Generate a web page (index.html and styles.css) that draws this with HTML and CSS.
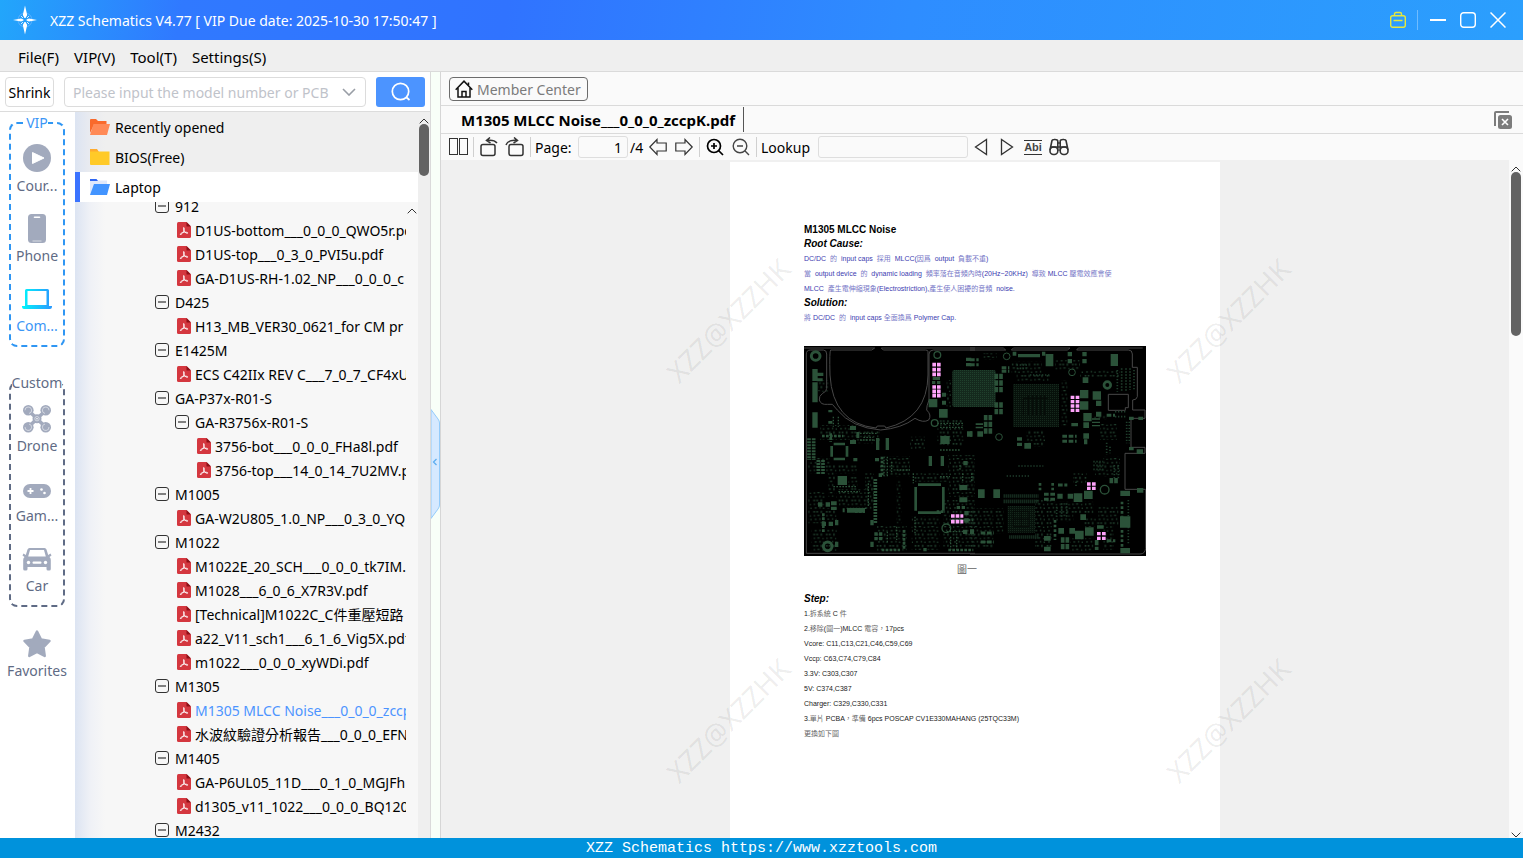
FILE: index.html
```html
<!DOCTYPE html>
<html lang="en"><head><meta charset="UTF-8">
    <title>XZZ Schematics</title>
    <link rel="stylesheet" href="styles.css">
</head>

<body>

    <!-- shared icons -->
    <svg class="sprite" aria-hidden="true">
        <symbol id="pdf" viewBox="0 0 14 16">
            <path d="M1.5 0H9.500L14 4.500V14.500Q14 16 12.500 16H1.500Q0 16 0 14.500V1.500Q0 0 1.500 0Z" fill="#d4373f"/>
            <path d="M9.500 0L14 4.500H9.500Z" fill="#8d1118"/>
            <path d="M6.800 5.500C6 5.500 6.800 8 7.300 9.200C8 10.700 9.800 11.500 10.700 11.200C11.300 10.500 9 10 7 10.200C5 10.500 3 11.700 3.300 12.500C4.200 13 5.800 10.800 6.600 9.200C7.200 8 7.500 5.700 6.800 5.500Z" fill="none" stroke="#fff" stroke-width=".9"/>
        </symbol>
        <symbol id="minus" viewBox="0 0 14 14">
            <rect x=".5" y=".5" width="13" height="13" rx="2.500" fill="none" stroke="#333"/>
            <path d="M3 7H11" stroke="#333" stroke-width="1.200"/>
        </symbol>
        <symbol id="up" viewBox="0 0 10 6">
            <path d="M.7 5.300L5 1L9.300 5.300" fill="none" stroke="#333"/>
        </symbol>
    </svg>

    <header class="titlebar">
        <svg class="logo" width="24" height="30" viewBox="0 0 24 30">
            <circle cx="12" cy="15" r="7" fill="none" stroke="#5eb2ff" stroke-width="1"/>
            <path d="M12 .5L14.200 10L12.500 13H11.500L9.800 10ZM12 29.500L14.200 20L12.500 17H11.500L9.800 20ZM0 15L8 13.500L10.500 14.500V15.500L8 16.500ZM24 15L16 13.500L13.500 14.500V15.500L16 16.500Z" fill="#fff"/>
            <path d="M8 11L10 13M16 11L14 13M8 19L10 17M16 19L14 17" stroke="#d5eaff"/>
        </svg>
        <h1 class="app-title">XZZ Schematics V4.77 [ VIP Due date: 2025-10-30 17:50:47 ]</h1>
        <button class="win-btn" aria-label="Toolbox"><svg width="18" height="18" viewBox="0 0 18 18" fill="none" stroke="#e6e83c" stroke-width="1.400"><rect x="1.700" y="4.700" width="14.600" height="11.600" rx="2"/><path d="M5.500 4.500V3Q5.500 1.500 7 1.500H11Q12.500 1.500 12.500 3V4.500M4.500 9.500H13.500"/></svg></button>
        <span class="win-sep"></span>
        <button class="win-btn" aria-label="Minimize"><svg width="16" height="16" viewBox="0 0 16 16"><path d="M0 8H16" stroke="#fff" stroke-width="2"/></svg></button>
        <button class="win-btn" aria-label="Maximize"><svg width="16" height="16" viewBox="0 0 16 16"><rect x=".7" y=".7" width="14.600" height="14.600" rx="3" fill="none" stroke="#fff" stroke-width="1.400"/></svg></button>
        <button class="win-btn" aria-label="Close"><svg width="16" height="16" viewBox="0 0 16 16"><path d="M.5 .5L15.500 15.500M15.500 .5L.5 15.500" stroke="#fff" stroke-width="1.500"/></svg></button>
    </header>

    <nav class="menubar">
        <button>File(F)</button>
        <button>VIP(V)</button>
        <button>Tool(T)</button>
        <button>Settings(S)</button>
    </nav>

    <main class="main">
        <section class="left">
            <form class="search">
                <button type="button" class="shrink">Shrink</button>
                <div class="combo">
                    <input type="text" aria-label="Model number" placeholder="Please input the model number or PCB">
                    <button type="button" aria-label="History"><svg width="14" height="8" viewBox="0 0 14 8"><path d="M1 1L7 7L13 1" fill="none" stroke="#999ea6" stroke-width="1.600"/></svg></button>
                </div>
                <button type="button" class="go" aria-label="Search"><svg width="20" height="20" viewBox="0 0 20 20" fill="none" stroke="#fff" stroke-width="1.700"><circle cx="9.500" cy="9.500" r="8.200"/><path d="M15 15L18.500 18"/></svg></button>
            </form>

            <div class="browser">
                <div class="sidebar">
                    <fieldset class="group vip">
                        <legend>VIP</legend>
                        <button class="cat">
                            <svg width="30" height="30" viewBox="0 0 30 30"><circle cx="15" cy="15" r="14" fill="#a2aabd"/><path d="M10.500 9.500V20.500L22 15Z" fill="#fff" stroke="#fff" stroke-linejoin="round"/></svg>
                            <span>Cour...</span>
                        </button>
                        <button class="cat">
                            <svg width="30" height="30" viewBox="0 0 30 30"><rect x="6" y="1" width="18" height="29" rx="3.500" fill="#a2aabd"/><path d="M12.500 4.200H17.500" stroke="#fff" stroke-width="1.600" stroke-linecap="round"/><path d="M10.500 28H19.500" stroke="#fff" stroke-width=".6"/></svg>
                            <span>Phone</span>
                        </button>
                        <button class="cat active">
                            <svg width="30" height="30" viewBox="0 0 30 30"><defs><linearGradient id="lap"><stop offset="0" stop-color="#00f6fb"/><stop offset="1" stop-color="#2a98ff"/></linearGradient></defs><path fill-rule="evenodd" d="M4.500 6H25.500Q27 6 27 7.500V23H30V24Q29.800 26 28 26H2Q.2 26 0 24V23H3V7.500Q3 6 4.500 6ZM5.500 8V22H24.500V8Z" fill="url(#lap)"/></svg>
                            <span>Com...</span>
                        </button>
                    </fieldset>

                    <fieldset class="group custom">
                        <legend>Custom</legend>
                        <button class="cat">
                            <svg width="30" height="30" viewBox="0 0 30 30"><g fill="#a2aabd"><circle cx="6.300" cy="7.300" r="5.300"/><circle cx="23.700" cy="7.300" r="5.300"/><circle cx="6.300" cy="24.300" r="5.300"/><circle cx="23.700" cy="24.300" r="5.300"/><circle cx="15" cy="15.700" r="4.500"/></g><path d="M6.500 7.500L23.500 24M23.500 7.500L6.500 24" stroke="#a2aabd" stroke-width="3.500"/><g fill="none" stroke="#e6e9ef" stroke-width=".7"><path d="M3 7.300A3.300 3.300 0 1 1 7 10.500M27 7.300A3.300 3.300 0 1 0 23 10.500M3 24A3.300 3.300 0 1 0 7 21M27 24A3.300 3.300 0 1 1 23 21"/><circle cx="15" cy="15.700" r="2.200"/></g><circle cx="15" cy="15.700" r=".8" fill="#fff"/></svg>
                            <span>Drone</span>
                        </button>
                        <button class="cat">
                            <svg width="30" height="30" viewBox="0 0 30 30"><rect x="1" y="11" width="28" height="14" rx="7" fill="#a2aabd"/><path d="M5.500 18H11.500M8.500 15V21" stroke="#fff" stroke-width="1.800"/><circle cx="19.500" cy="16.500" r="1.300" fill="#fff"/><circle cx="22.500" cy="20" r="1.300" fill="#fff"/></svg>
                            <span>Gam...</span>
                        </button>
                        <button class="cat">
                            <svg width="30" height="30" viewBox="0 0 30 30"><path fill-rule="evenodd" fill="#a2aabd" d="M7.500 5H22.500Q24 5 24.500 6.500L26.200 12L28.500 10.500L29.500 12.500L27.500 14Q28.800 15 28.800 17V26Q28.800 27.500 27.300 27.500H26Q24.500 27.500 24.500 26V24H5.500V26Q5.500 27.500 4 27.500H2.700Q1.200 27.500 1.200 26V17Q1.200 15 2.500 14L.5 12.500L1.500 10.500L3.800 12L5.500 6.500Q6 5 7.500 5ZM8 7L6.200 13.500H23.800L22 7Z"/><circle cx="6.500" cy="19.500" r="1.700" fill="#fff"/><circle cx="23.500" cy="19.500" r="1.700" fill="#fff"/><rect x="10.500" y="18.500" width="9" height="2.200" rx="1" fill="#fff"/></svg>
                            <span>Car</span>
                        </button>
                    </fieldset>

                    <button class="cat favorites">
                        <svg width="30" height="30" viewBox="0 0 30 30"><path d="M15 3.500L19 11.500L27.500 13L21.500 19.200L22.700 28L15 24L7.300 28L8.500 19.200L2.500 13L11 11.500Z" fill="#a2aabd" stroke="#a2aabd" stroke-width="2.500" stroke-linejoin="round"/></svg>
                        <span>Favorites</span>
                    </button>
                </div>

                <div class="folders">
                    <button class="folder">
                        <svg width="20" height="16" viewBox="0 0 20 16"><path d="M0 14V1Q0 0 1 0H6L8 2H16.500V6H4Z" fill="#f96a2c"/><path d="M3.500 5H20L17 16H0Z" fill="#ff8a57"/></svg>
                        Recently opened
                    </button>
                    <button class="folder">
                        <svg width="20" height="16" viewBox="0 0 20 16"><path d="M0 5V0H7L9 3V5Z" fill="#ffab2e"/><path d="M0 2.500H19.500V16H1Q0 16 0 15Z" fill="#ffca28"/></svg>
                        BIOS(Free)
                    </button>
                    <button class="folder selected">
                        <svg width="20" height="16" viewBox="0 0 20 16"><path d="M0 16V1.500H17V6Z" fill="#dfe8fb"/><path d="M0 2V0H6.500L8 2Z" fill="#2f66f2"/><path d="M4 5H20L17 16H0Z" fill="#4294ff"/></svg>
                        Laptop
                    </button>

                    <div class="tree-box">
                        <ul class="tree">
                            <li><svg><use href="#minus"/></svg>912</li>
                            <li class="file"><svg><use href="#pdf"/></svg>D1US-bottom___0_0_0_QWO5r.pdf</li>
                            <li class="file"><svg><use href="#pdf"/></svg>D1US-top___0_3_0_PVI5u.pdf</li>
                            <li class="file"><svg><use href="#pdf"/></svg>GA-D1US-RH-1.02_NP___0_0_0_c</li>
                            <li><svg><use href="#minus"/></svg>D425</li>
                            <li class="file"><svg><use href="#pdf"/></svg>H13_MB_VER30_0621_for CM pr</li>
                            <li><svg><use href="#minus"/></svg>E1425M</li>
                            <li class="file"><svg><use href="#pdf"/></svg>ECS C42IIx REV C___7_0_7_CF4xU</li>
                            <li><svg><use href="#minus"/></svg>GA-P37x-R01-S</li>
                            <li class="sub"><svg><use href="#minus"/></svg>GA-R3756x-R01-S</li>
                            <li class="sub file"><svg><use href="#pdf"/></svg>3756-bot___0_0_0_FHa8l.pdf</li>
                            <li class="sub file"><svg><use href="#pdf"/></svg>3756-top___14_0_14_7U2MV.pdf</li>
                            <li><svg><use href="#minus"/></svg>M1005</li>
                            <li class="file"><svg><use href="#pdf"/></svg>GA-W2U805_1.0_NP___0_3_0_YQ</li>
                            <li><svg><use href="#minus"/></svg>M1022</li>
                            <li class="file"><svg><use href="#pdf"/></svg>M1022E_20_SCH___0_0_0_tk7IM.pdf</li>
                            <li class="file"><svg><use href="#pdf"/></svg>M1028___6_0_6_X7R3V.pdf</li>
                            <li class="file"><svg><use href="#pdf"/></svg>[Technical]M1022C_C件重壓短路</li>
                            <li class="file"><svg><use href="#pdf"/></svg>a22_V11_sch1___6_1_6_Vig5X.pdf</li>
                            <li class="file"><svg><use href="#pdf"/></svg>m1022___0_0_0_xyWDi.pdf</li>
                            <li><svg><use href="#minus"/></svg>M1305</li>
                            <li class="file current"><svg><use href="#pdf"/></svg>M1305 MLCC Noise___0_0_0_zccpK.pdf</li>
                            <li class="file"><svg><use href="#pdf"/></svg>水波紋驗證分析報告___0_0_0_EFN</li>
                            <li><svg><use href="#minus"/></svg>M1405</li>
                            <li class="file"><svg><use href="#pdf"/></svg>GA-P6UL05_11D___0_1_0_MGJFh</li>
                            <li class="file"><svg><use href="#pdf"/></svg>d1305_v11_1022___0_0_0_BQ120</li>
                            <li><svg><use href="#minus"/></svg>M2432</li>
                        </ul>
                        <svg class="tree-up" width="10" height="6"><use href="#up"/></svg>
                    </div>
                </div>

                <div class="scroll">
                    <svg width="10" height="6"><use href="#up"/></svg>
                    <div class="thumb"></div>
                </div>
            </div>
        </section>

        <div class="splitter">
            <svg width="9" height="110" viewBox="0 0 9 110"><path d="M0 .5L7 10Q8.500 12 8.500 14V96Q8.500 98 7 100L0 109.500Z" fill="#d6e9ff" stroke="#93cbfa"/><path d="M5.500 50L2.500 53L5.500 56" fill="none" stroke="#5eaef0" stroke-width="1.300"/></svg>
        </div>

        <section class="right">
            <div class="member-row">
                <button class="member">
                    <svg width="18" height="18" viewBox="0 0 18 18" fill="none" stroke="#111" stroke-width="1.500"><path d="M.7 9.800L9 1.200L17.300 9.800M3 8V17H15V8M7 17V11.500H11V17M13.500 2.500V5"/></svg>
                    Member Center
                </button>
            </div>
            <div class="tabs">
                <button class="tab">M1305 MLCC Noise___0_0_0_zccpK.pdf</button>
                <button class="close-all" aria-label="Close all"><svg width="18" height="18" viewBox="0 0 18 18"><path d="M1 15V2Q1 1 2 1H15" fill="none" stroke="#7c7c7c" stroke-width="2"/><rect x="4" y="4" width="14" height="14" rx="2.500" fill="#7c7c7c"/><path d="M8 8L14 14M14 8L8 14" stroke="#fff" stroke-width="1.600"/></svg></button>
            </div>
            <div class="toolbar">
                <button class="tool pages" aria-label="Two pages"><svg width="20" height="18" viewBox="0 0 20 18" fill="none" stroke="#333"><rect x=".5" y=".5" width="8" height="16"/><rect x="10.500" y=".5" width="8" height="16"/></svg></button>
                <span class="sep"></span>
                <button class="tool" aria-label="Rotate left"><svg width="20" height="20" viewBox="0 0 20 20" fill="none" stroke="#333" stroke-width="1.500"><rect x="2" y="7.500" width="14" height="11" rx="2"/><path d="M18 6Q15 2.500 8 3.500M11 .5L7.500 3.500L11.500 6"/></svg></button>
                <button class="tool" aria-label="Rotate right"><svg width="20" height="20" viewBox="0 0 20 20" fill="none" stroke="#333" stroke-width="1.500"><rect x="4" y="7.500" width="14" height="11" rx="2"/><path d="M1 8Q3 2.500 12 3.500M9 .5L12.500 3.500L8.500 6"/></svg></button>
                <span class="sep"></span>
                <label class="page-label" for="page">Page:</label>
                <input class="page-no" id="page" type="text" value="1">
                <span class="total">/4</span>
                <button class="tool" aria-label="Previous page"><svg width="18" height="18" viewBox="0 0 18 18" fill="none" stroke="#333" stroke-width="1.200"><path d="M.8 9L8 1.500V5H17.200V13H8V16.500Z"/></svg></button>
                <button class="tool" aria-label="Next page"><svg width="18" height="18" viewBox="0 0 18 18" fill="none" stroke="#333" stroke-width="1.200"><path d="M17.200 9L10 1.500V5H.8V13H10V16.500Z"/></svg></button>
                <span class="sep"></span>
                <button class="tool" aria-label="Zoom in"><svg width="18" height="18" viewBox="0 0 18 18" fill="none" stroke="#000" stroke-width="1.700"><circle cx="8" cy="8" r="6.500"/><path d="M12.500 12.500L17 17M5 8H11M8 5V11"/></svg></button>
                <button class="tool" aria-label="Zoom out"><svg width="18" height="18" viewBox="0 0 18 18" fill="none" stroke="#444" stroke-width="1.400"><circle cx="8" cy="8" r="6.800"/><path d="M12.800 12.800L17 17M5 8H11"/></svg></button>
                <span class="sep"></span>
                <label class="look-label" for="look">Lookup</label>
                <input class="look" id="look" type="text">
                <button class="tool" aria-label="Find previous"><svg width="14" height="18" viewBox="0 0 14 18" fill="none" stroke="#333" stroke-width="1.300"><path d="M12.500 1.500V16.500L1.500 9Z"/></svg></button>
                <button class="tool" aria-label="Find next"><svg width="14" height="18" viewBox="0 0 14 18" fill="none" stroke="#333" stroke-width="1.300"><path d="M1.500 1.500V16.500L12.500 9Z"/></svg></button>
                <button class="tool abi"><span>Abi</span></button>
                <button class="tool" aria-label="Find all"><svg width="20" height="18" viewBox="0 0 20 18" fill="none" stroke="#333" stroke-width="1.600"><path d="M1 12L3 2.500Q3.300 1.500 5 1.500Q8.500 1.200 8.800 3V13M19 12L17 2.500Q16.700 1.500 15 1.500Q11.500 1.200 11.200 3V13M1.500 9H8.500M11.500 9H18.500M9 5H11M9 9H11"/><rect x="1" y="9" width="7.800" height="7.500" rx="3.500"/><rect x="11.200" y="9" width="7.800" height="7.500" rx="3.500"/></svg></button>
            </div>

            <div class="viewer">
                <div class="canvas">
                    <article class="page">
                        <h2>M1305 MLCC Noise</h2>
                        <h3>Root Cause:</h3>
                        <p class="blue">DC/DC&nbsp; <span>的</span>&nbsp; input caps&nbsp; <span>採用</span>&nbsp; MLCC(<span>因爲</span>&nbsp; output&nbsp; <span>負載不重</span>)</p>
                        <p class="blue"><span>當</span>&nbsp; output device&nbsp; <span>的</span>&nbsp; dynamic loading&nbsp; <span>頻率落在音頻內時</span>(20Hz~20KHz)&nbsp; <span>導致</span> MLCC <span>壓電效應會使</span></p>
                        <p class="blue">MLCC&nbsp; <span>產生電伸縮現象</span>(Electrostriction),<span>產生使人困擾的音頻</span>&nbsp; noise.</p>
                        <h3>Solution:</h3>
                        <p class="blue"><span>將</span> DC/DC&nbsp; <span>的</span>&nbsp; input caps <span>全面換爲</span> Polymer Cap.</p>

                        <svg class="board" viewBox="0 0 1026 630" fill="none">
                            <defs>
                                <pattern id="bga" width="6" height="6" patternUnits="userSpaceOnUse"><rect width="6" height="6" fill="#14291d"/><rect width="3" height="3" fill="#1f402c"/></pattern>
                                <pattern id="dark" width="6" height="6" patternUnits="userSpaceOnUse"><rect width="6" height="6" fill="#07110b"/><rect width="3" height="3" fill="#15281c"/></pattern>
                                <pattern id="dots" width="38" height="34" patternUnits="userSpaceOnUse"><path d="M2 3h5v5h-5zM11 3h5v5h-5zM24 2h4v7h-4zM3 15h4v4h-4zM14 14h7v4h-7zM29 16h4v4h-4zM6 26h6v4h-6zM20 25h4v5h-4zM31 27h4v4h-4z" fill="#1f3e2c"/></pattern>
                            </defs>
                            <rect width="1026" height="630" fill="#000"/>
                            <!-- left half -->
                            <g transform="translate(-12 -18)">
                                <path fill="url(#dots)" d="M60 255H170V300H60ZM25 350H90V400H25ZM150 270H240V310H150ZM85 375H170V400H85ZM85 400H105V470H85ZM145 405H172V470H145ZM110 448H200V500H110ZM25 455H75V550H25ZM240 348H330V410H240ZM330 290H375V330H330ZM412 240H490V318H412ZM340 400H450V425H340ZM445 345H525V470H445ZM195 400H222V510H195ZM290 420H305V550H290ZM60 505H110V540H60ZM430 480H525V620H430ZM225 555H320V635H225ZM335 530H420V630H335ZM55 120H85V155H55ZM440 120H455V200H440ZM35 565H110V635H35Z"/>
                                <g stroke="#474747" stroke-width="3">
                                    <path d="M19 640V42Q19 30 32 30H70Q80 30 80 42V145Q80 155 68 160Q56 168 58 180Q62 195 82 193H97L112 210Q155 263 242 270Q305 265 345 235Q370 250 386 240Q396 225 380 210Q379 200 387 180V42Q388 30 400 30H525M92 30H215L224 24H12M92 30Q88 32 90 105Q98 250 228 264L232 258H254L258 264Q382 235 384 105V35Q384 30 376 30H250L244 24H525M19 640H525"/>
                                </g>
                                <g stroke="#2b5239">
                                    <circle cx="47" cy="48" r="13" stroke-width="9"/>
                                    <circle cx="83" cy="619" r="13" stroke-width="9"/>
                                    <circle cx="412" cy="45" r="10" stroke-width="4"/>
                                    <circle cx="404" cy="249" r="10" stroke-width="4"/>
                                    <circle cx="439" cy="565" r="13" stroke-width="4"/>
                                    <path stroke-width="8" d="M101 312H135M101 357H135M95 318V350M141 318V350M354 434H423M354 518H423M347 441V512M430 441V512"/>
                                    <path stroke-width="10" d="M233 294V330M262 294V330M391 348V378M427 348V378"/>
                                    <path stroke-width="11" stroke-dasharray="6 3" d="M27 295V360M41 295V360M55 360V402M69 360V402M226 417V550"/>
                                    <path stroke-width="8" stroke-dasharray="8 4" d="M66 288H130M92 280V306M70 520V580M165 515H195M246 350V410M410 515H435M455 540H520M312 570V630M245 630H300M445 630H520"/>
                                    <path stroke-width="4" stroke-dasharray="5 4" d="M180 280H230M190 292H220M100 230V260M115 230V260M180 300H225M252 350V410M262 350V410M275 365V400M290 390H330M340 400V430M420 410H450M488 400V425M515 400V425M205 430V500M100 440H170M115 455H180M345 530V580M440 575H500M452 590V630M470 590V630M480 375V390M262 575V610M290 560V600M412 250H490M420 262H490M420 330H480M140 505H200"/>
                                </g>
                                <path fill="#2b5239" d="M37 87h16v36h-16zM37 127h16v60h-16zM37 217h16v46h-16zM50 98h20v10h-20zM50 115h18v9h-18zM85 210h12v7h-12zM85 243h12v8h-12zM150 258h18v12h-18zM150 300h18v12h-18zM169 276h9v18h-9zM113 408h28v27h-28zM128 505h6v12h-6zM141 504h54v14h-54zM160 354h12v10h-12zM225 354h12v10h-12zM236 400h10v11h-10zM386 177h26v25h-26zM417 207h26v26h-26zM426 158h12v12h-12zM426 182h12v12h-12zM421 288h28v24h-28zM501 274h16v16h-16zM398 111h22v9h-22zM396 123h10v9h-10zM411 123h10v9h-10zM478 435h24v15h-24zM478 472h24v15h-24zM490 363h13v13h-13zM54 487h13v13h-13zM77 487h13v13h-13zM93 484h17v12h-17zM93 500h17v10h-17zM65 545h13v13h-13zM86 545h13v13h-13zM105 540h10v16h-10zM105 605h10v16h-10zM211 540h10v16h-10zM211 605h10v16h-10zM223 577h10v10h-10zM237 577h10v10h-10zM223 591h10v10h-10zM237 591h10v10h-10zM470 498h10v9h-10zM485 498h10v9h-10zM493 513h13v13h-13zM493 535h13v13h-13zM489 569h13v13h-13zM510 569h12v13h-12zM498 53h16v10h-16zM498 69h16v10h-16zM370 624h10v10h-10z"/>
                                <rect x="457" y="90" width="130" height="111" rx="6" fill="url(#bga)"/>
                                <g stroke="#ffa3fb" stroke-width="11" stroke-dasharray="11 3">
                                    <path d="M397 74H423M397 89H423M397 103H423M397 141H423M397 154H423M397 167H423M453 528H490M453 545H490"/>
                                </g>
                            </g>
                            <!-- right half -->
                            <g transform="translate(498 -18)">
                                <path fill="url(#dots)" d="M125 65H215V100H125ZM40 40H80V60H40ZM330 90H450V110H330ZM170 270H225V320H170ZM140 100H240V124H140ZM400 350H450V400H400ZM310 400H350V430H310ZM375 365H450V410H375ZM75 505H100V580H75ZM195 480H245V625H195ZM245 485H310V545H245ZM310 485H370V520H310ZM385 500H445V555H385ZM340 535H430V560H340ZM400 560H430V630H400ZM0 505H70V625H0ZM370 225H410V240H370ZM300 595H370V635H300ZM275 120H292V260H275ZM255 60H330V90H255ZM390 250H440V300H390Z"/>
                                <path fill="url(#dark)" d="M129 132H267V261H129ZM113 498H195V578H113Z"/>
                                <path d="M160 175H235M160 175V225M175 165V225M188 165V225M200 165V225M212 165V225M224 165V225M130 514H177V560H130ZM130 537H177M154 514V560" stroke="#060b08" stroke-width="3"/>
                                <path stroke="#474747" stroke-width="3" d="M0 24H100L107 30H0M130 24L124 30H292L300 24H130M518 24H325L320 30H475Q487 30 487 42V82H502V170Q500 180 488 180V210H525V235H483V322H525V340H465V448H527V625Q525 642 510 642H0M415 163H475V203H466V211H415Z"/>
                                <g stroke="#2b5239">
                                    <circle cx="110" cy="49" r="10" stroke-width="3"/>
                                    <circle cx="306" cy="97" r="10" stroke-width="3"/>
                                    <circle cx="87" cy="291" r="10" stroke-width="3"/>
                                    <circle cx="412" cy="135" r="10" stroke-width="8"/>
                                    <circle cx="404" cy="449" r="13" stroke-width="4"/>
                                    <path stroke-width="11" stroke-dasharray="16 4" d="M79 101V160M93 101V160M79 187V225M93 187V225M47 225V285M61 225V285M278 592V630M292 592V630M380 600V630M424 414V430M438 414V430"/>
                                    <path stroke-width="9" stroke-dasharray="14 5" d="M0 59H26M0 74H26M277 289H320M277 304H320M222 463H260M222 478H260M32 579H72M32 606H72M95 83H118M95 94H118M410 226H435M410 602H436M264 435H292"/>
                                    <path stroke-width="8" stroke-dasharray="8 6" d="M456 485V530M456 570V620M210 429V455M248 429V455M255 540V600"/>
                                    <path stroke="#1f3e2c" stroke-width="11" stroke-dasharray="3 3" d="M101 468H205M101 484H205M118 591H205"/>
                                    <path stroke="#1f3e2c" stroke-width="5" stroke-dasharray="4 5" d="M435 215H470M435 230H470M442 90V155M455 85V155M468 85V155M480 85V150M492 90V150M470 245V310M478 245V310M410 308V345M420 320V340M110 408H180M145 378H220M318 425V440M370 365H400M370 376H400M370 388H400M433 375V415M445 375V415M475 480V615M140 75H175M140 85H170M180 105H240M8 400V425M260 500V530M275 490V530M290 490V530"/>
                                </g>
                                <path fill="#2b5239" d="M128 35h11v12h-11zM144 42h66v10h-66zM216 35h10v12h-10zM227 42h23v37h-23zM293 36h13v13h-13zM337 36h13v13h-13zM293 57h13v13h-13zM337 57h13v13h-13zM422 42h22v36h-22zM338 112h17v17h-17zM330 150h25v25h-25zM330 184h25v25h-25zM368 154h25v25h-25zM378 182h16v16h-16zM340 219h25v25h-25zM378 215h16v15h-16zM340 247h17v17h-17zM304 249h20v10h-20zM340 280h17v16h-17zM342 298h10v15h-10zM141 292h15v10h-15zM141 308h15v10h-15zM163 309h20v17h-20zM0 274h7v16h-7zM22 274h17v16h-17zM24 448h20v26h-20zM70 448h20v26h-20zM262 461h16v15h-16zM293 461h16v15h-16zM311 460h26v26h-26zM342 452h26v25h-26zM331 523h17v17h-17zM265 564h17v17h-17zM298 564h17v17h-17zM345 562h26v25h-26zM315 572h26v26h-26zM222 588h20v14h-20zM222 620h20v14h-20zM451 452h29v16h-29zM450 529h31v34h-31zM451 624h29v16h-29zM500 328h19v14h-19zM501 444h19v14h-19zM477 230h14v10h-14zM505 230h14v10h-14zM477 321h14v10h-14zM381 556h20v10h-20zM17 250h22v5h-22zM17 260h22v5h-22zM0 568h12v13h-12zM366 235h24v4h-24zM366 245h24v4h-24zM366 255h24v4h-24z"/>
                                <g stroke="#ffa3fb" stroke-width="10" stroke-dasharray="11 4">
                                    <path d="M302 172H328M302 185H328M302 198H328M302 211H328M351 432H378M351 445H378M381 581H407M381 595H407"/>
                                </g>
                            </g>
                        </svg>
                        <p class="caption"><span>圖一</span></p>

                        <h3 class="step">Step:</h3>
                        <p>1.<span>拆系統</span> C <span>件</span></p>
                        <p>2.<span>移除</span>(<span>圖一</span>)MLCC <span>電容，</span>17pcs</p>
                        <p>Vcore: C11,C13,C21,C46,C59,C69</p>
                        <p>Vccp: C63,C74,C79,C84</p>
                        <p>3.3V: C303,C307</p>
                        <p>5V: C374,C387</p>
                        <p>Charger: C329,C330,C331</p>
                        <p>3.<span>單片</span> PCBA<span>，準備</span> 6pcs POSCAP CV1E330MAHANG (25TQC33M)</p>
                        <p><span>更換如下圖</span></p>
                    </article>
                    <div class="marks">
                        <span>XZZ@XZZHK</span>
                        <span>XZZ@XZZHK</span>
                        <span>XZZ@XZZHK</span>
                        <span>XZZ@XZZHK</span>
                    </div>
                </div>
                <div class="scroll page-scroll">
                    <svg width="10" height="6"><use href="#up"/></svg>
                    <div class="thumb"></div>
                    <svg class="down" width="10" height="6"><use href="#up"/></svg>
                </div>
            </div>
        </section>
    </main>

    <footer class="footer">XZZ Schematics https://www.xzztools.com</footer>

</body></html>
```
FILE: styles.css
```css
* {
    box-sizing: border-box;
}

body {
    margin: 0;
    height: 100vh;
    display: flex;
    flex-direction: column;
    overflow: hidden;
    font-family: "Noto Sans", "Noto Sans CJK TC", sans-serif;
    font-size: 14px;
    color: #000;
}

button, input {
    font: inherit;
    color: inherit;
    padding: 0;
    border: none;
    background: none;
}

svg {
    display: block;
    flex: none;
}

.sprite {
    position: absolute;
    width: 0;
    height: 0;
}

/* title bar */
.titlebar {
    flex: none;
    height: 40px;
    padding: 0 10px 0 13px;
    display: flex;
    align-items: center;
    background: linear-gradient(100deg, #22a6fb 0, #3079ff 180px, #3073ff 500px, #2e8dff 900px, #2b9ffd 100%);
    color: #fff;
}

.app-title {
    flex: 1;
    margin: 0 0 0 13px;
    font-size: 14px;
    font-weight: normal;
}

.win-btn {
    width: 30px;
    height: 30px;
    display: flex;
    align-items: center;
    justify-content: center;
}

.win-sep {
    width: 1px;
    height: 20px;
    margin: 0 5px 0 4px;
    background: #6fbcff;
}

/* menu */
.menubar {
    flex: none;
    height: 32px;
    padding: 2px 18px 0;
    display: flex;
    gap: 15px;
    background: #efefef;
    border-bottom: 1px solid #dadada;
    font-size: 15px;
}

.main {
    flex: 1;
    min-height: 0;
    display: flex;
}

/* left side */
.left {
    width: 431px;
    flex: none;
    display: flex;
    flex-direction: column;
    border-right: 1px solid #dadada;
    background: #fff;
}

.search {
    height: 40px;
    padding: 5px 5px 4px;
    display: flex;
    gap: 10px;
    border-bottom: 1px solid #dcdcdc;
}

.shrink {
    width: 49px;
    border: 1px solid #dcdcdc;
    border-radius: 4px;
}

.combo {
    flex: 1;
    display: flex;
    align-items: center;
    padding: 0 9px 0 8px;
    border: 1px solid #dcdcdc;
    border-radius: 4px;
}

.combo input {
    flex: 1;
    min-width: 0;
    outline: none;
}

.combo input::placeholder {
    color: #bfc3ca;
}

.go {
    width: 49px;
    display: flex;
    align-items: center;
    justify-content: center;
    border-radius: 3px;
    background: #4c94ff;
}

.browser {
    flex: 1;
    min-height: 0;
    display: flex;
}

.sidebar {
    width: 74px;
    padding: 2px 0 0;
    display: flex;
    flex-direction: column;
    align-items: center;
    color: #5f6b85;
}

.group {
    width: 56px;
    min-width: 0;
    margin: 0 0 27px;
    padding: 11px 0 9px;
    display: flex;
    flex-direction: column;
    gap: 17px;
    align-items: center;
    border: 2px dashed #5f6b85;
    border-radius: 8px;
}

.group legend {
    margin: 0 auto;
    padding: 0;
    line-height: 18px;
}

.vip {
    border-color: #2f96f3;
}

.vip legend, .active {
    color: #3b96f6;
}

.custom {
    margin-bottom: 21px;
}

.cat {
    display: flex;
    flex-direction: column;
    align-items: center;
    gap: 3px;
    line-height: 20px;
}

.folders {
    flex: 1;
    min-width: 0;
    display: flex;
    flex-direction: column;
    margin-left: 1px;
    background: linear-gradient(90deg, #dce4f2 0, #eff1f6 15px, #f7f7f7 30px);
}

.folder {
    height: 30px;
    flex: none;
    padding-left: 15px;
    display: flex;
    align-items: center;
    gap: 5px;
    background: linear-gradient(90deg, #dce4f2 0, #e9ebf0 15px, #efefef 30px);
}

.selected {
    padding-left: 10px;
    border-left: 5px solid #3b73ff;
    background: #fff;
}

.tree-box {
    flex: 1;
    min-height: 0;
    position: relative;
    overflow: hidden;
}

.tree {
    margin: -8px 12px 0 80px;
    padding: 0;
    overflow: hidden;
    list-style: none;
}

.tree li {
    height: 24px;
    display: flex;
    align-items: center;
    gap: 6px;
    white-space: nowrap;
}

.tree svg {
    width: 14px;
    height: 14px;
}

.tree .file {
    padding-left: 22px;
    gap: 4px;
}

.tree .file svg {
    height: 16px;
}

.tree .sub {
    padding-left: 20px;
}

.tree .sub.file {
    padding-left: 42px;
}

.tree .current {
    color: #4c94ff;
}

.tree-up {
    position: absolute;
    top: 6px;
    right: 1px;
}

.scroll {
    width: 12px;
    flex: none;
    padding-top: 6px;
    display: flex;
    flex-direction: column;
    align-items: center;
    background: #efefef;
}

.thumb {
    width: 10px;
    height: 52px;
    border-radius: 5px;
    background: #636363;
}

.splitter {
    width: 10px;
    flex: none;
    display: flex;
    align-items: center;
    padding-top: 18px;
    border-right: 1px solid #d6d6d6;
    background: #f8fff8;
}

/* right side */
.right {
    flex: 1;
    min-width: 0;
    display: flex;
    flex-direction: column;
    background: #fafafa;
}

.member-row {
    height: 34px;
    padding: 5px 8px 4px;
    display: flex;
    border-bottom: 1px solid #dadada;
}

.member {
    height: 24px;
    padding: 0 6px 0 5px;
    display: flex;
    align-items: center;
    gap: 4px;
    border: 1px solid #6c6c6c;
    border-radius: 4px;
    color: #7b7b7b;
}

.tabs {
    height: 28px;
    padding: 1px 11px 1px 20px;
    display: flex;
    justify-content: space-between;
    border-bottom: 1px solid #dadada;
}

.tab {
    padding-right: 8px;
    border-right: 1px solid #555;
    font-size: 15px;
    font-weight: bold;
}

.toolbar {
    height: 26px;
    padding: 0 8px;
    display: flex;
    align-items: center;
    gap: 4px;
}

.tool {
    width: 22px;
    height: 22px;
    flex: none;
    display: flex;
    align-items: center;
    justify-content: center;
}

.pages {
    width: 20px;
}

.sep {
    width: 1px;
    height: 20px;
    background: #d0d0d0;
}

.page-label {
    width: 37px;
}

.look-label {
    width: 51px;
}

.total {
    width: 13px;
}

.toolbar input {
    height: 22px;
    margin: 0 -2px 0 2px;
    padding: 0 5px;
    border: 1px solid #dedede;
    border-radius: 3px;
}

.toolbar .page-no {
    width: 50px;
    text-align: right;
}

.toolbar .look {
    width: 150px;
}

.abi span {
    border-top: 1px solid #333;
    border-bottom: 1px solid #333;
    font: bold 11px/13px "Liberation Sans", Arial, sans-serif;
    color: #444;
}

.viewer {
    flex: 1;
    min-height: 0;
    display: flex;
}

.canvas {
    flex: 1;
    position: relative;
    padding-top: 2px;
    overflow: hidden;
    background: #f0f0f0;
}

.page {
    width: 490px;
    min-height: 100%;
    margin: 0 auto;
    padding: 60px 74px;
    background: #fff;
    font-family: "Liberation Sans", Arial, "Noto Sans CJK TC", sans-serif;
    font-size: 7px;
    line-height: 15px;
    color: #222;
}

.page h2, .page h3 {
    margin: 0;
    font-size: 10px;
    line-height: 14px;
    color: #000;
}

.page h2 {
    line-height: 15px;
}

.page h3 {
    font-style: italic;
}

.page p {
    height: 15px;
    margin: 0;
    white-space: nowrap;
}

.page p span {
    opacity: 0.7;
}

.page .blue {
    color: #3c3cb0;
}

.board {
    width: 100%;
    margin-top: 21px;
}

.page .caption {
    margin: 6px 0 15px;
    padding-right: 16px;
    font-size: 10px;
    text-align: center;
}

.marks {
    position: absolute;
    top: -40px;
    left: 37px;
    display: grid;
    grid-template-columns: 500px 500px;
    grid-auto-rows: 400px;
    place-items: center;
    font-size: 28px;
    color: rgba(0, 0, 0, 0.08);
}

.marks span {
    transform: rotate(-45deg);
}

.page-scroll {
    width: 14px;
    background: #fafafa;
}

.page-scroll .thumb {
    height: 164px;
}

.down {
    margin-top: auto;
    transform: rotate(180deg);
}

.footer {
    flex: none;
    height: 20px;
    background: #0092dc;
    color: #fff;
    font: 15px/22px "Liberation Mono", "Courier New", monospace;
    text-align: center;
}
```
